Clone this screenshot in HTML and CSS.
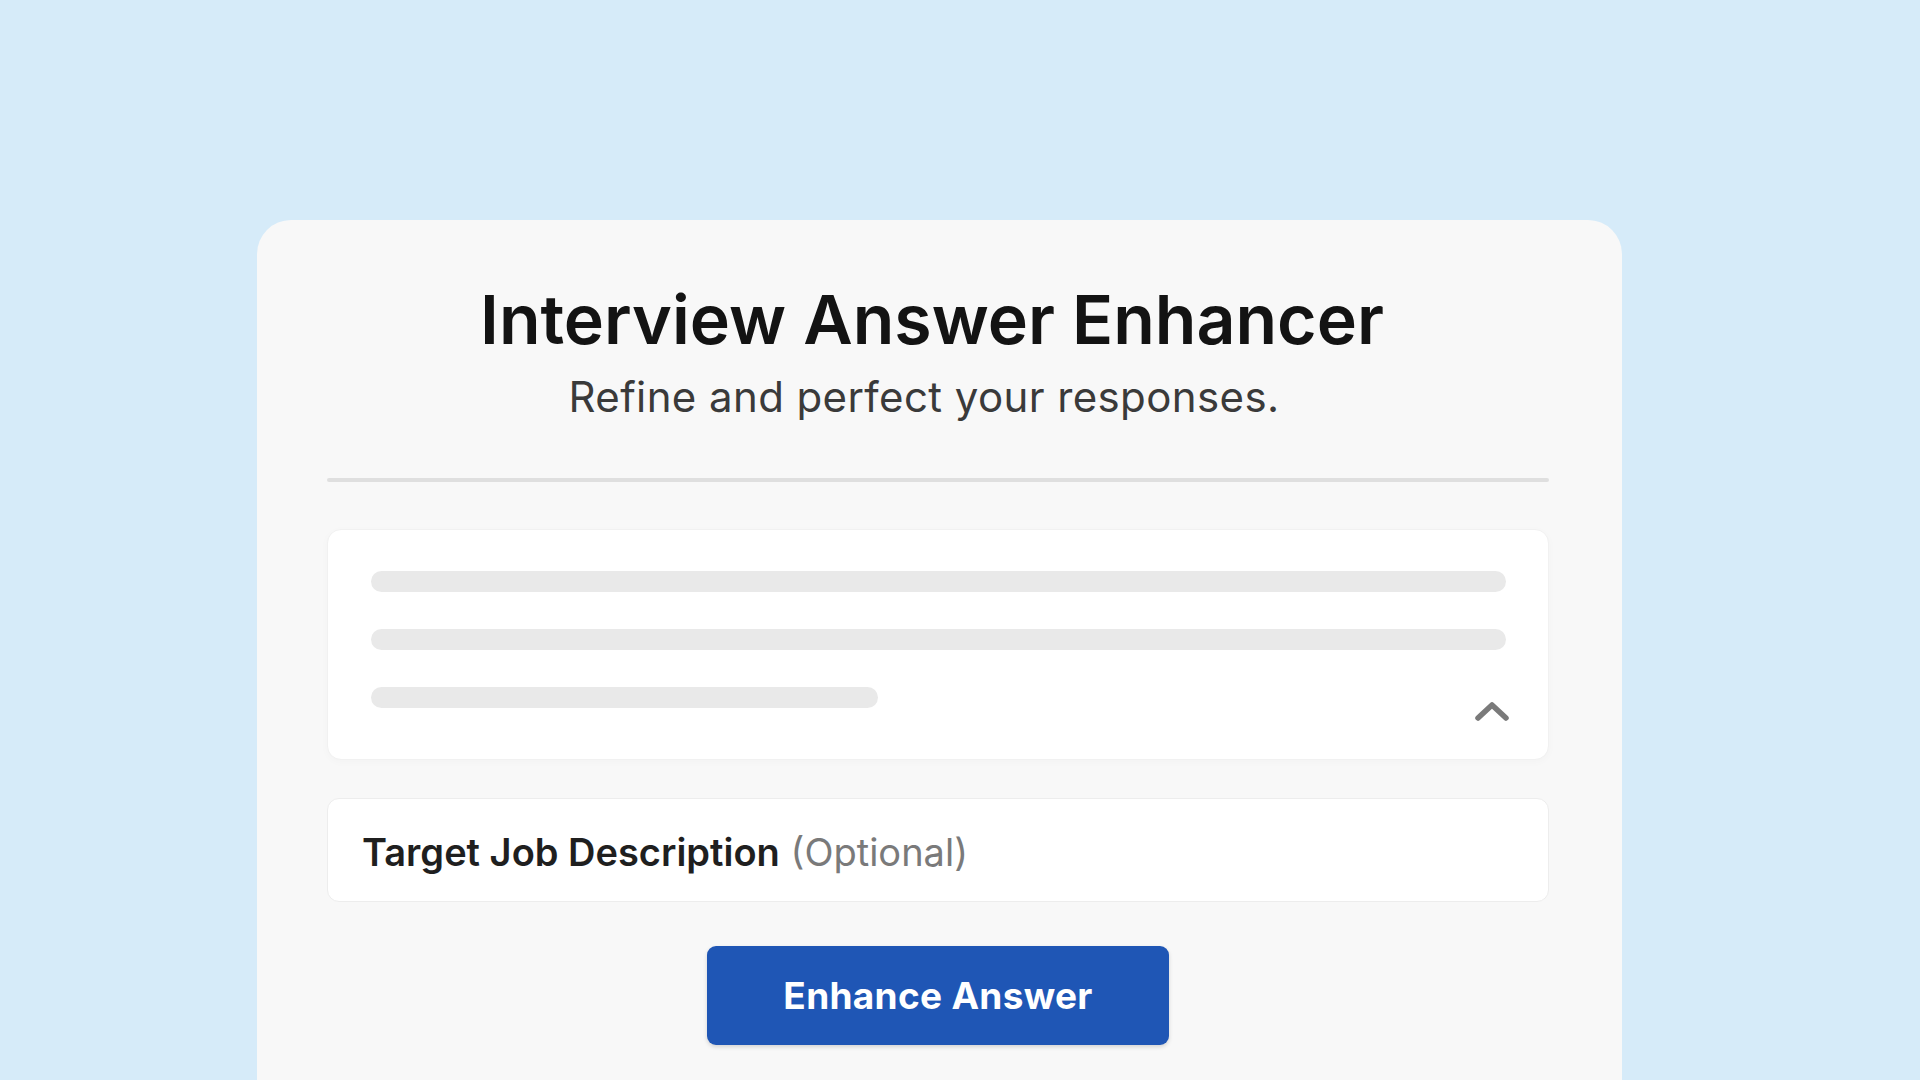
FILE: index.html
```html
<!DOCTYPE html>
<html lang="en">
<head>
<meta charset="utf-8">
<title>Interview Answer Enhancer</title>
<link rel="stylesheet" href="styles.css">
</head>
<body>
<main class="card">
  <header class="head">
    <h1 class="title">Interview Answer Enhancer</h1>
    <p class="subtitle">Refine and perfect your responses.</p>
  </header>
  <hr class="divider">
  <section class="answer">
    <div class="skel"></div>
    <div class="skel"></div>
    <div class="skel skel-short"></div>
    <svg class="chev" viewBox="0 0 36 22" width="36" height="22" aria-hidden="true">
      <path d="M4 18 L18 5 L32 18" fill="none" stroke="#7a7a7a" stroke-width="5.5" stroke-linecap="round" stroke-linejoin="round"/>
    </svg>
  </section>
  <div class="job">
    <p class="job-text"><span class="job-label">Target Job Description</span> <span class="job-opt">(Optional)</span></p>
  </div>
  <div class="actions">
    <button class="btn" type="button">Enhance Answer</button>
  </div>
</main>
</body>
</html>
```

FILE: styles.css
```css
html, body {
  margin: 0;
  height: 100%;
  overflow: hidden;
}
body {
  background: #d6ebf9;
  font-family: "Inter", "Noto Sans", "Liberation Sans", sans-serif;
}
.card {
  box-sizing: border-box;
  margin: 220px 0 0 257px;
  width: 1365px;
  height: 1000px;
  background: #f8f8f8;
  border-radius: 34px;
  padding: 58px 73px 0 70px;
}
.head {
  display: flex;
  flex-direction: column;
  align-items: center;
  padding-right: 12px;
}
.title {
  margin: 0;
  font-size: 68px;
  line-height: 82px;
  font-weight: 600;
  color: #131313;
  letter-spacing: 0;
}
.subtitle {
  margin: 12px 0 0;
  padding-right: 16px;
  font-size: 42px;
  line-height: 50px;
  font-weight: 400;
  color: #3a3a3a;
  letter-spacing: 0.4px;
}
.divider {
  margin: 56px 0 0;
  border: 0;
  height: 4px;
  background: #dfdfdf;
  border-radius: 2px;
}
.answer {
  position: relative;
  box-sizing: border-box;
  margin-top: 47px;
  height: 231px;
  background: #ffffff;
  border: 1px solid #f1f1f1;
  border-radius: 14px;
  box-shadow: 0 2px 8px rgba(0, 0, 0, 0.025);
  padding: 41px 42px 0 43px;
  display: flex;
  flex-direction: column;
  gap: 37px;
}
.skel {
  height: 21px;
  border-radius: 11px;
  background: #e9e9e9;
}
.skel-short {
  width: 507px;
}
.chev {
  position: absolute;
  right: 38px;
  bottom: 37px;
}
.job {
  box-sizing: border-box;
  margin-top: 38px;
  height: 104px;
  background: #ffffff;
  border: 1px solid #ededed;
  border-radius: 12px;
  padding: 0 0 0 34px;
  display: flex;
  align-items: center;
}
.job-text {
  margin: 4px 0 0;
  font-size: 38px;
  line-height: 46px;
}
.job-label {
  font-weight: 600;
  color: #1f1f1f;
}
.job-opt {
  font-weight: 400;
  color: #7a7a7a;
}
.actions {
  display: flex;
  justify-content: center;
  margin-top: 44px;
}
.btn {
  width: 462px;
  height: 99px;
  border: 0;
  border-radius: 9px;
  background: #1f56b5;
  color: #ffffff;
  font-family: "Inter", "Noto Sans", "Liberation Sans", sans-serif;
  font-size: 37px;
  font-weight: 700;
  letter-spacing: 0.3px;
  box-shadow: 0 2px 4px rgba(0, 0, 0, 0.15);
}
```
